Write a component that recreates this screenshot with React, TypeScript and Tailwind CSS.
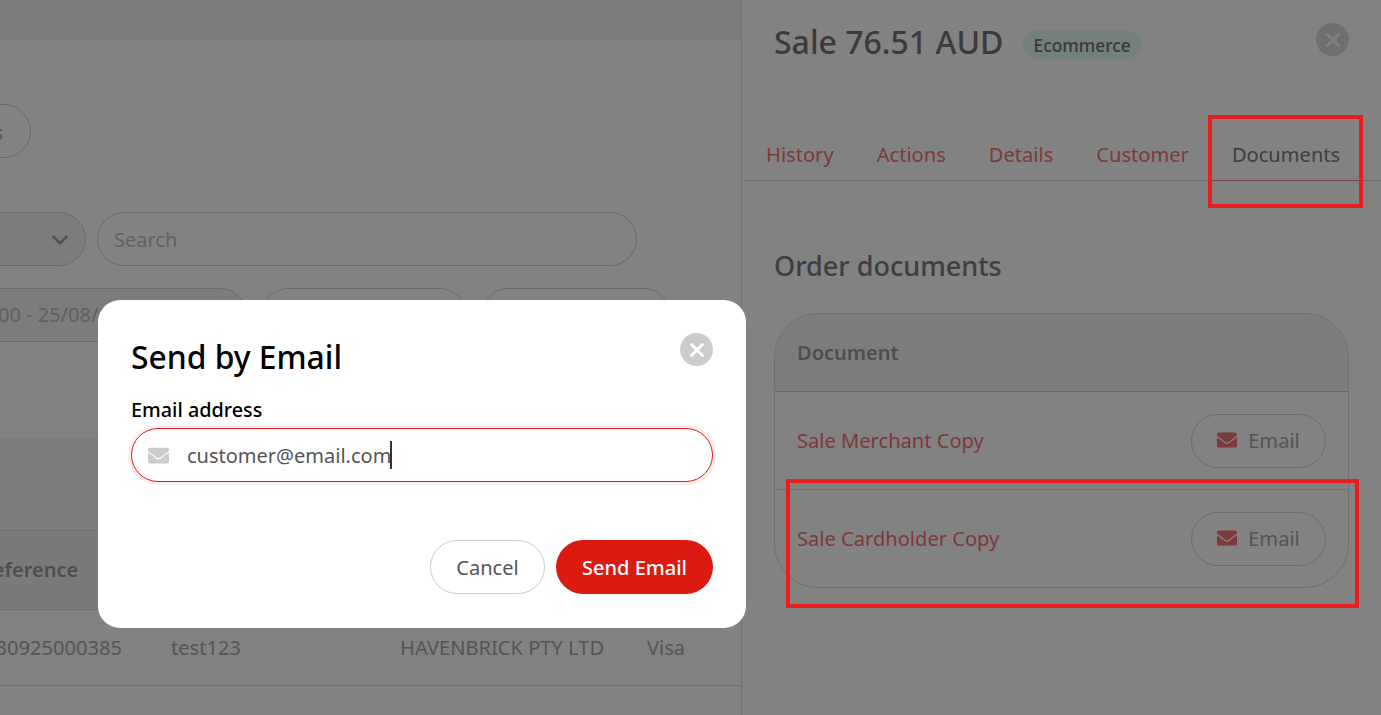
import { ChevronDown, X } from 'lucide-react';
import { FaEnvelope } from 'react-icons/fa';

const font = { fontFamily: '"Noto Sans", sans-serif' };

const Pill = ({ className, children }: { className: string; children?: React.ReactNode }) => (
  <div className={`flex h-[54px] shrink-0 items-center rounded-[27px] border border-[#d0d0d0] ${className}`}>{children}</div>
);

const DocRow = ({ name, className }: { name: string; className: string }) => (
  <div className={`flex items-center justify-between px-[22px] ${className}`}>
    <span className="pt-[1px] text-[20.1px] text-[#f47272]">{name}</span>
    <div className="mt-[1px] flex h-[54px] w-[135px] items-center justify-center gap-[11px] rounded-[27px] border border-[#d4d4d4] bg-white">
      <FaEnvelope className="mt-[-2px] h-[20px] w-[20px] text-[#f47272]" />
      <span className="text-[20.1px] text-[#a8a8a8]">Email</span>
    </div>
  </div>
);

export default function App() {
  return (
    <div className="relative flex h-[715px] w-[1381px] overflow-hidden bg-white" style={font}>
      {/* Transactions page behind the drawer */}
      <div className="flex w-[742px] shrink-0 flex-col overflow-hidden border-r border-[#dcdcdc]">
        <div className="h-[40px] shrink-0 bg-[#f3f3f3]" />
        <div className="mt-[64px] ml-[-60px] w-[802px]">
          <Pill className="w-[91px] justify-end bg-white pt-[3px] pr-[27px] text-[20px] text-[#a8a8a8]">s</Pill>
        </div>
        <div className="mt-[54px] ml-[-60px] flex w-[802px] gap-[11px]">
          <Pill className="w-[146px] justify-end bg-[#f3f3f3] pr-[12px]">
            <ChevronDown className="mt-[2px] h-[26px] w-[26px] text-[#a0a0a0]" strokeWidth={2.4} />
          </Pill>
          <Pill className="w-[540px] bg-white pt-[2px] pl-[16px] text-[20px] text-[#c0c0c0]">Search</Pill>
        </div>
        <div className="mt-[22px] ml-[-60px] flex w-[802px] gap-[14px]">
          <Pill className="w-[307px] overflow-hidden whitespace-nowrap bg-[#f3f3f3] pl-[57px] text-[20px] text-[#bcbcbc]">00 - 25/08/2025 00:00</Pill>
          <Pill className="w-[206px] bg-white" />
          <Pill className="w-[190px] bg-white" />
        </div>
        <div className="mt-[96px] h-[92px] shrink-0 bg-[#f3f3f3]" />
        <div className="flex h-[80px] shrink-0 items-center border-y border-[#dcdcdc] bg-[#f0f0f0] text-[20px] font-semibold text-[#999999]">
          <span className="ml-[-20px]">Reference</span>
        </div>
        <div className="flex h-[76px] shrink-0 items-center border-b border-[#dcdcdc] pt-[2px] text-[20.1px] text-[#a8a8a8]">
          <span className="ml-[-16px] w-[187px] shrink-0">130925000385</span>
          <span className="w-[229px] shrink-0">test123</span>
          <span className="w-[247px] shrink-0">HAVENBRICK PTY LTD</span>
          <span>Visa</span>
        </div>
      </div>

      {/* Sale drawer */}
      <div className="flex min-w-0 flex-1 flex-col px-[32px]">
        <div className="flex h-[86px] shrink-0 items-start">
          <span className="mt-[20px] text-[32px] leading-[44px] font-medium text-[#747474]">Sale 76.51 AUD</span>
          <span className="mt-[30px] ml-[20px] flex h-[30px] items-center rounded-[15px] bg-[#e3fbf0] px-[10px] pt-[1px] text-[17.4px] font-medium text-[#707070]">Ecommerce</span>
          <div className="mt-[23px] ml-auto flex h-[33px] w-[33px] items-center justify-center rounded-full bg-[#d9d9d9] text-white">
            <X size={22} strokeWidth={3.2} />
          </div>
        </div>
        <div className="mt-[44px] mr-[-32px] ml-[-30px] flex h-[51px] shrink-0 gap-[43px] border-b border-[#d0d0d0] pl-[22px] text-[20.1px] text-[#f47272]">
          <span className="flex items-center">History</span>
          <span className="flex items-center">Actions</span>
          <span className="flex items-center">Details</span>
          <span className="flex items-center">Customer</span>
          <span className="mb-[-1px] ml-[-20px] flex items-center border-b border-[#e08888] px-[20px] text-[#7c7c7c]">Documents</span>
        </div>
        <div className="mt-[65px] text-[27px] leading-[40px] font-medium text-[#7c7c7c]">Order documents</div>
        <div className="mt-[27px] overflow-hidden rounded-[44px] border border-[#d8d8d8]">
          <div className="flex h-[78px] items-center border-b border-[#c8c8c8] bg-[#f3f3f3] pt-[1px] pl-[22px] text-[20px] font-semibold text-[#999999]">Document</div>
          <DocRow name="Sale Merchant Copy" className="h-[98px] border-b border-[#dcdcdc]" />
          <DocRow name="Sale Cardholder Copy" className="h-[97px]" />
        </div>
      </div>

      {/* Scrim */}
      <div className="absolute inset-0 bg-black/49" />

      {/* Annotation boxes sit over the scrim */}
      <div className="absolute top-[115px] left-[1208px] h-[93px] w-[155px] border-[4px] border-[#e81e1e]" />
      <div className="absolute top-[479px] left-[786px] h-[129px] w-[573px] border-[4px] border-[#e81e1e]" />

      {/* Send by Email dialog */}
      <div className="absolute top-[300px] left-[98px] h-[328px] w-[648px] rounded-[22px] bg-white px-[33px] pt-[33px]">
        <div className="flex items-start justify-between">
          <h2 className="mt-[3px] text-[31.8px] leading-[42px] font-medium text-black">Send by Email</h2>
          <div className="flex h-[33px] w-[33px] items-center justify-center rounded-full bg-[#cccccc] text-white">
            <X size={22} strokeWidth={3.2} />
          </div>
        </div>
        <div className="mt-[18px] text-[19.8px] leading-[27px] font-medium text-black">Email address</div>
        <div className="mt-[5px] flex h-[54px] items-center rounded-[27px] border border-[#de1a12] pl-[16px] shadow-[0_0_0_3px_rgba(222,26,18,0.08)]">
          <FaEnvelope className="h-[21px] w-[21px] text-[#cccccc]" />
          <span className="ml-[18px] pt-[2px] text-[20px] text-[#555]">customer@email.com</span>
          <span className="ml-[-1px] h-[28px] w-[1.5px] bg-[#333]" />
        </div>
        <div className="mt-[58px] flex justify-end gap-[11px]">
          <button className="h-[54px] w-[115px] rounded-[27px] border border-[#cccccc] bg-white pt-[1px] text-[20px] text-[#555]">Cancel</button>
          <button className="h-[54px] w-[157px] rounded-[27px] bg-[#dc1a12] pt-[1px] text-[20px] font-medium text-white">Send Email</button>
        </div>
      </div>
    </div>
  );
}
